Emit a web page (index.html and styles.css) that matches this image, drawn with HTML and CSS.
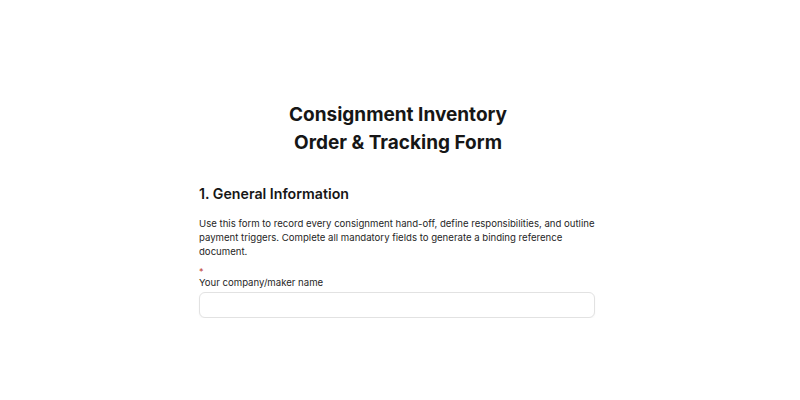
FILE: index.html
```html
<!DOCTYPE html>
<html>
<head>
<meta charset="utf-8">
<link rel="stylesheet" href="styles.css">
</head>
<body>
<main class="page">
  <h1 class="title">Consignment Inventory<br>Order &amp; Tracking Form</h1>
  <section class="section">
    <h2 class="section-title">1. General Information</h2>
    <p class="intro">Use this form to record every consignment hand-off, define responsibilities, and outline payment triggers. Complete all mandatory fields to generate a binding reference document.</p>
    <div class="field">
      <span class="req">*</span>
      <label class="label" for="company">Your company/maker name</label>
      <input class="input" id="company" type="text">
    </div>
  </section>
</main>
</body>
</html>
```
FILE: styles.css
```css
* { box-sizing: border-box; }
html, body { margin: 0; padding: 0; background: #fff; }
body { font-family: Inter, "Noto Sans", sans-serif; color: #1a1a1a; }
.page { width: 398px; margin: 0 auto; padding-top: 101px; position: relative; left: -2px; }
.title { margin: 0; text-align: center; font-size: 19px; line-height: 28px; font-weight: 700; color: #161616; }
.section { margin-top: 27px; }
.section-title { margin: 0; font-size: 14.2px; line-height: 20px; font-weight: 600; color: #161616; }
.intro { margin: 13px 0 0; font-size: 9.6px; line-height: 14px; color: #262626; }
.field { display: flex; flex-direction: column; margin-top: 9px; }
.req { color: #c0392b; font-size: 9px; line-height: 8px; height: 8px; }
.label { font-size: 9.6px; line-height: 14px; color: #262626; }
.input { margin-top: 2px; width: 396px; height: 26px; border: 1px solid #e2e2e2; border-radius: 6px; background: #fff; box-shadow: 0 1px 2px rgba(0,0,0,0.04); }
```
